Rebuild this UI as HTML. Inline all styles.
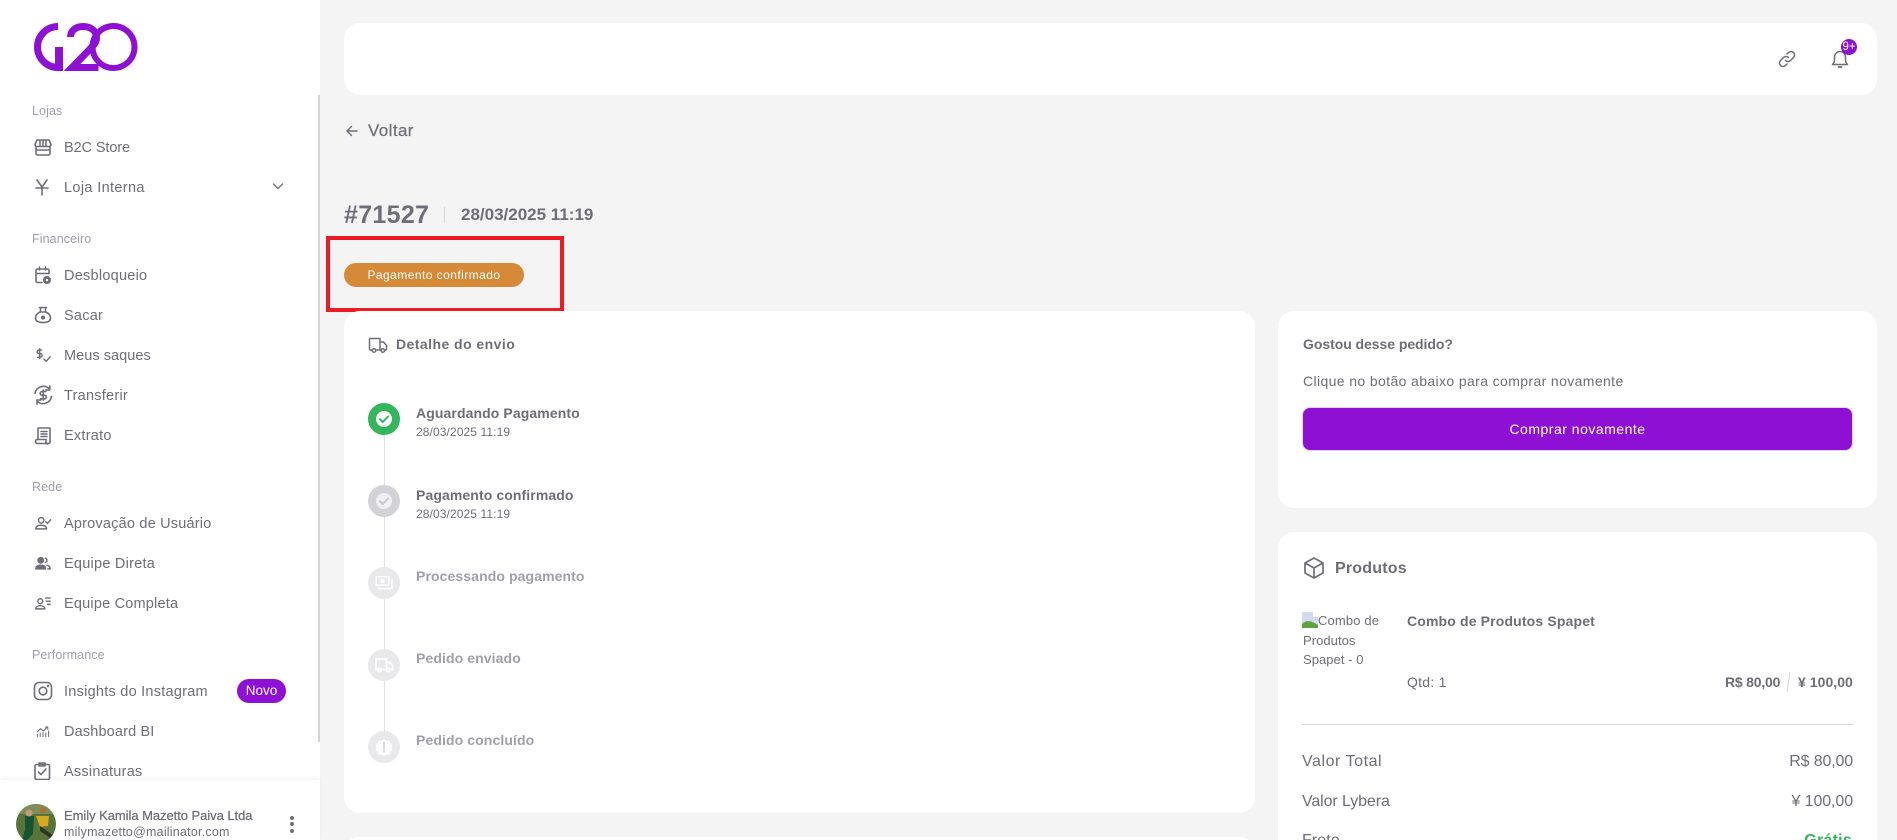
<!DOCTYPE html>
<html lang="pt-BR">
<head>
<meta charset="utf-8">
<title>Pedido #71527</title>
<style>
*{box-sizing:border-box}
html,body{margin:0;padding:0;width:1897px;height:840px;overflow:hidden}
body{background:#f4f4f4;font-family:"Liberation Sans",sans-serif;color:#6f6e77}
#root{position:relative;width:1897px;height:840px;overflow:hidden;background:#f4f4f4}
.a,.t,svg.i{position:absolute}
.t{line-height:20px;height:20px;white-space:nowrap;font-size:14.5px;letter-spacing:.25px}
.sec{font-size:12.5px;color:#a0a0ab;left:32px;letter-spacing:.1px}
.m{left:64px;margin-top:1px}
.card{position:absolute;background:#fff;border-radius:16px}
.b{font-weight:700}
.st{left:416px;font-weight:700;font-size:14px;letter-spacing:.1px}
.dt{left:416px;font-size:12px;letter-spacing:.1px}
.off{color:#a0a0ab}
svg.i{fill:none;stroke:#6f6e77;stroke-width:1.6;stroke-linecap:round;stroke-linejoin:round}
.c{position:absolute;left:368px;width:32px;height:32px;border-radius:50%}
</style>
</head>
<body>
<div id="root">

<!-- Sidebar -->
<aside class="a" style="left:0;top:0;width:320px;height:840px;background:#fff"></aside>
<div class="a" style="left:318px;top:95px;width:2px;height:647px;background:#d4d4d9"></div>

<svg class="a" style="left:0;top:0" width="160" height="90" viewBox="0 0 160 90" fill="none" stroke="#8e10d4" stroke-width="7">
<path d="M58 26.500A20.500 20.500 0 0 0 58 67.500"/>
<path d="M59 47V71" stroke-width="8"/>
<path d="M70.500 37C70.500 30.500 76 26.500 83 26.500C91 26.500 96.500 31 96.500 38C96.500 42 94 45 90.500 48.500L72 67.500H98.500" stroke-linejoin="miter"/>
<circle cx="113.500" cy="47" r="21" stroke-width="6"/>
</svg>

<div class="t sec" style="top:101px">Lojas</div>
<svg class="i" style="left:33px;top:137px" width="20" height="20" viewBox="0 0 20 20"><path d="M3 9V16.500a1.500 1.500 0 0 0 1.500 1.500H15.500a1.500 1.500 0 0 0 1.500-1.500V9M4 3H16L18 7.500a2 2 0 0 1-2 2H4a2 2 0 0 1-2-2ZM7 3.500V9M10 3.500V9M13 3.500V9M3 13H17"/></svg>
<div class="t m" style="top:137px;letter-spacing:-.1px">B2C Store</div>
<svg class="i" style="left:32px;top:177px" width="20" height="20" viewBox="0 0 20 20"><path d="M5 3L10 10L15 3M4 11H16M10 10V18"/></svg>
<div class="t m" style="top:177px;letter-spacing:.35px">Loja Interna</div>
<svg class="i" style="left:272px;top:180px;stroke-width:1.3" width="12" height="12" viewBox="0 0 12 12"><path d="M1.500 4L6 8.500L10.500 4"/></svg>

<div class="t sec" style="top:229px">Financeiro</div>
<svg class="i" style="left:33px;top:265px" width="20" height="20" viewBox="0 0 20 20"><path d="M16 8V5.500A1.500 1.500 0 0 0 14.500 4H4.500A1.500 1.500 0 0 0 3 5.500V16a1.500 1.500 0 0 0 1.500 1.500H9M3 8.500H16M6.500 2V5M12.500 2V5"/><circle cx="14" cy="15" r="4" fill="#6f6e77" stroke="none"/><circle cx="14" cy="15" r="1.200" fill="#fff" stroke="none"/></svg>
<div class="t m" style="top:265px">Desbloqueio</div>
<svg class="i" style="left:33px;top:305px" width="20" height="20" viewBox="0 0 20 20"><path d="M6.500 2.500H13.500M7.500 2.500V6.500M12.500 2.500V6.500M7 7C4 8.500 2.500 10.500 2.500 13C2.500 16 5 17.500 10 17.500S17.500 16 17.500 13C17.500 10.500 16 8.500 13 7Z"/><circle cx="10" cy="12.500" r="1.300" fill="#6f6e77"/></svg>
<div class="t m" style="top:305px">Sacar</div>
<svg class="i" style="left:34px;top:346px" width="18" height="18" viewBox="0 0 20 20"><path d="M8.500 4.500H5.500A1.500 1.500 0 0 0 5.500 8.500H7A1.500 1.500 0 0 1 7 12.500H4M6.300 3V14M11 14.500L13.500 17L18 12"/></svg>
<div class="t m" style="top:345px;letter-spacing:.05px">Meus saques</div>
<svg class="i" style="left:32px;top:385px" width="22" height="20" viewBox="0 0 22 20"><path d="M3 8.500A8.500 8.500 0 0 1 17.500 4M19.500 11.500A8.500 8.500 0 0 1 5 16M17.800 1V5H13.800M5 19V15H9M14 6.500H10A1.800 1.800 0 0 0 10 10.200H12.500A1.800 1.800 0 0 1 12.500 13.800H8.500M11.200 5V15"/></svg>
<div class="t m" style="top:385px">Transferir</div>
<svg class="i" style="left:33px;top:425px" width="20" height="20" viewBox="0 0 20 20"><path d="M5 14.500V3H17V17A1.500 1.500 0 0 1 15.500 18.500H4A1.800 1.800 0 0 1 2.500 16.500A2 2 0 0 1 4 14.500H13V17A1.500 1.500 0 0 0 15.500 18.500M8 6.500H14M8 9H14M8 11.500H14"/></svg>
<div class="t m" style="top:425px">Extrato</div>

<div class="t sec" style="top:477px">Rede</div>
<svg class="i" style="left:34px;top:514px" width="18" height="18" viewBox="0 0 20 20"><circle cx="8" cy="7" r="3"/><path d="M2 16.500C2 13.500 5 12.500 8 12.500S14 13.500 14 16.500H2ZM13 8.500L15 10.500L18.500 6.500"/></svg>
<div class="t m" style="top:513px;letter-spacing:.2px">Aprovação de Usuário</div>
<svg class="i" style="left:34px;top:554px" width="18" height="18" viewBox="0 0 20 20"><circle cx="7.500" cy="7" r="3" fill="#6f6e77"/><path d="M2 16.500C2 13.500 4.500 12.500 7.500 12.500S13 13.500 13 16.500H2Z" fill="#6f6e77"/><path d="M12.500 4.500A2.600 2.600 0 0 1 12.500 9.500M14.500 12.500C16.500 13 18 14.500 18 16.500H15.500"/></svg>
<div class="t m" style="top:553px">Equipe Direta</div>
<svg class="i" style="left:34px;top:594px" width="18" height="18" viewBox="0 0 20 20"><circle cx="7" cy="8" r="2.700"/><path d="M2 16.500C2 14 4.500 13 7 13S12 14 12 16.500H2ZM13 4.500H18M13.500 8H18M15 11.500H18"/></svg>
<div class="t m" style="top:593px;letter-spacing:.2px">Equipe Completa</div>

<div class="t sec" style="top:645px">Performance</div>
<svg class="i" style="left:32px;top:680px" width="22" height="22" viewBox="0 0 22 22"><rect x="2.500" y="2.500" width="17" height="17" rx="4.500"/><circle cx="11" cy="11" r="3.800"/><circle cx="16" cy="6" r=".5"/></svg>
<div class="t m" style="top:681px">Insights do Instagram</div>
<div class="a" style="left:237px;top:679px;width:49px;height:24px;background:#8e10d4;border-radius:12px;color:#fff;font-size:13.500px;line-height:24px;text-align:center">Novo</div>
<svg class="i" style="left:35px;top:723px;stroke-width:1.3" width="16" height="16" viewBox="0 0 20 20"><path d="M3 17V14M6.500 17V12.500M10 17V12M13.500 17V12.500M17 17V10M3 11L7 7L10.500 10L15.500 5M13 5H16V8"/></svg>
<div class="t m" style="top:721px;letter-spacing:.15px">Dashboard BI</div>
<svg class="i" style="left:32px;top:761px" width="20" height="20" viewBox="0 0 20 20"><rect x="3" y="3.500" width="14.500" height="15" rx="1.500"/><path d="M7 2H13V5H7ZM6.500 11L9 13.500L14 8"/></svg>
<div class="t m" style="top:761px">Assinaturas</div>

<div class="a" style="left:0;top:780px;width:320px;height:60px;background:#fff;box-shadow:0 -2px 4px rgba(0,0,0,.05)"></div>
<svg class="a" style="left:16px;top:804px" width="40" height="40" viewBox="0 0 40 40"><defs><clipPath id="av"><circle cx="20" cy="20" r="20"/></clipPath></defs><g clip-path="url(#av)"><rect width="40" height="40" fill="#59743a"/><rect width="40" height="10" fill="#7c8f57"/><path d="M9 12H18L17 30L11 36L6 36L9 26Z" fill="#16532f"/><circle cx="13" cy="9" r="3.500" fill="#c99b7c"/><path d="M20 12H33L32 22L24 23Z" fill="#d6a91f"/><circle cx="27" cy="6" r="3.500" fill="#a9743a"/><path d="M24 22L38 32L34 34L24 27Z" fill="#2c3526"/></g></svg>
<div class="t" style="left:64px;top:806px;font-size:13px;letter-spacing:-.05px;-webkit-text-stroke:.25px #6f6e77">Emily Kamila Mazetto Paiva Ltda</div>
<div class="t" style="left:64px;top:822px;font-size:12.500px;letter-spacing:.22px">milymazetto@mailinator.com</div>
<div class="a" style="left:290px;top:816px;width:4px;height:4px;border-radius:50%;background:#6f6e77"></div>
<div class="a" style="left:290px;top:822px;width:4px;height:4px;border-radius:50%;background:#6f6e77"></div>
<div class="a" style="left:290px;top:829px;width:4px;height:4px;border-radius:50%;background:#6f6e77"></div>

<!-- Header -->
<div class="card" style="left:344px;top:23px;width:1533px;height:72px"></div>
<svg class="i" style="left:1777px;top:49px;stroke-width:1.500" width="20" height="20" viewBox="0 0 20 20"><path d="M8.500 11.500A3.500 3.500 0 0 0 13.500 11.500L16.500 8.500A3.500 3.500 0 0 0 11.500 3.500L10 5M11.500 8.500A3.500 3.500 0 0 0 6.500 8.500L3.500 11.500A3.500 3.500 0 0 0 8.500 16.500L10 15"/></svg>
<svg class="i" style="left:1830px;top:49px;stroke-width:1.500" width="20" height="20" viewBox="0 0 20 20"><path d="M2.500 15.500C3.500 14.500 4.500 13.500 4.500 11V8A5.500 5.500 0 0 1 15.500 8V11C15.500 13.500 16.500 14.500 17.500 15.500Z"/><path d="M8.500 18H11.500" stroke-width="1.800"/></svg>
<div class="a" style="left:1841px;top:39px;width:16px;height:16px;border-radius:50%;background:#8e10d4;color:#fff;font-size:11.500px;line-height:16px;text-align:center">9+</div>

<!-- Voltar / title -->
<svg class="i" style="left:345px;top:124px;stroke-width:1.400" width="14" height="14" viewBox="0 0 14 14"><path d="M12 7H2M6.500 2.500L2 7L6.500 11.500"/></svg>
<div class="t" style="left:368px;top:121px;font-size:17px;letter-spacing:.4px;-webkit-text-stroke:.2px #6f6e77">Voltar</div>
<div class="t b" style="left:344px;top:205px;font-size:25px;letter-spacing:.3px">#71527</div>
<div class="a" style="left:444px;top:207px;width:1px;height:16px;background:#d4d4d9"></div>
<div class="t b" style="left:461px;top:205px;font-size:17px;letter-spacing:0">28/03/2025 11:19</div>
<div class="a" style="left:344px;top:263px;width:180px;height:24px;background:#d68a38;border-radius:12px;color:#fff;font-size:12px;line-height:24px;text-align:center;letter-spacing:.45px">Pagamento confirmado</div>
<div class="a" style="left:326px;top:236px;width:238px;height:76px;border:4.500px solid #ec1c24"></div>

<!-- Shipping card -->
<div class="card" style="left:344px;top:311px;width:911px;height:502px"></div>
<div class="card" style="left:344px;top:837px;width:911px;height:30px"></div>
<svg class="i" style="left:368px;top:335px;stroke-width:1.500" width="20" height="20" viewBox="0 0 20 20"><path d="M4 15H2.500A1 1 0 0 1 1.500 14V4.500A1 1 0 0 1 2.500 3.500H12V15H8M12 7H15.500L18.500 10.500V14A1 1 0 0 1 17.500 15H16.500M12 15H13"/><circle cx="6" cy="15.500" r="1.800"/><circle cx="14.800" cy="15.500" r="1.800"/></svg>
<div class="t b" style="left:396px;top:334px;font-size:14px;letter-spacing:.45px">Detalhe do envio</div>

<div class="a" style="left:384px;top:435px;width:1px;height:300px;background:#e2e2e6"></div>

<div class="c" style="top:403px;background:#34b75b"></div>
<svg class="a" style="left:374px;top:409px" width="20" height="20" viewBox="0 0 20 20"><circle cx="10" cy="10" r="8" fill="#fff"/><path d="M6 10.200L8.800 13L14 7.500" fill="none" stroke="#34b75b" stroke-width="2" stroke-linecap="round" stroke-linejoin="round"/></svg>
<div class="t st" style="top:403px">Aguardando Pagamento</div>
<div class="t dt" style="top:422px">28/03/2025 11:19</div>

<div class="c" style="top:485px;background:#d2d2d7"></div>
<svg class="a" style="left:374px;top:491px" width="20" height="20" viewBox="0 0 20 20"><circle cx="10" cy="10" r="8" fill="#f0f0f2"/><path d="M6 10.200L8.800 13L14 7.500" fill="none" stroke="#c6c6cc" stroke-width="2" stroke-linecap="round" stroke-linejoin="round"/></svg>
<div class="t st" style="top:485px">Pagamento confirmado</div>
<div class="t dt" style="top:504px">28/03/2025 11:19</div>

<div class="c" style="top:567px;background:#e9e9ec"></div>
<svg class="a" style="left:374px;top:573px" width="20" height="20" viewBox="0 0 20 20"><rect x="1.500" y="3" width="14" height="10" rx="1" fill="#fff"/><rect x="3" y="4.500" width="11" height="7" fill="#e9e9ec"/><circle cx="8.500" cy="8" r="2.200" fill="#fff"/><path d="M18 6V15.500H4" fill="none" stroke="#fff" stroke-width="1.500"/></svg>
<div class="t st off" style="top:566px">Processando pagamento</div>

<div class="c" style="top:649px;background:#e9e9ec"></div>
<svg class="a" style="left:374px;top:655px" width="20" height="20" viewBox="0 0 20 20" fill="none" stroke="#fff" stroke-width="1.700"><path d="M3.500 14.500H2V4H12.500V14.500H7.500M12.500 7.500H16L18.500 10.500V14.500H16.500"/><circle cx="5.500" cy="15" r="1.600"/><circle cx="14.500" cy="15" r="1.600"/></svg>
<div class="t st off" style="top:648px">Pedido enviado</div>

<div class="c" style="top:731px;background:#e9e9ec"></div>
<svg class="a" style="left:374px;top:737px" width="20" height="20" viewBox="0 0 20 20"><path d="M10 2L12.300 3.700L15.200 3.500L16.100 6.200L18.400 8L17.500 10.700L18.400 13.400L16 15L15.200 17.700L12.300 17.500L10 19L7.700 17.500L4.800 17.700L4 15L1.600 13.400L2.500 10.700L1.600 8L3.900 6.200L4.800 3.500L7.700 3.700Z" fill="#fff"/><path d="M10 6V11.500M10 13.500V14.800" stroke="#d9d9de" stroke-width="2" stroke-linecap="round"/></svg>
<div class="t st off" style="top:730px">Pedido concluído</div>

<!-- Right column -->
<div class="card" style="left:1278px;top:311px;width:599px;height:197px"></div>
<div class="t b" style="left:1303px;top:334px;font-size:14px;letter-spacing:-.05px">Gostou desse pedido?</div>
<div class="t" style="left:1303px;top:371px;font-size:14px;letter-spacing:.38px">Clique no botão abaixo para comprar novamente</div>
<div class="a" style="left:1302px;top:407px;width:551px;height:44px;background:#8e10d4;border:1px solid #e2d8ee;border-radius:8px;color:#fff;font-size:14px;line-height:42px;text-align:center;letter-spacing:.5px">Comprar novamente</div>

<div class="card" style="left:1278px;top:532px;width:599px;height:340px"></div>
<svg class="i" style="left:1302px;top:556px;stroke-width:1.700" width="24" height="24" viewBox="0 0 24 24"><path d="M12 2L21 7V17L12 22L3 17V7ZM3 7L12 12L21 7M12 12V22"/></svg>
<div class="t b" style="left:1335px;top:559px;font-size:16px;letter-spacing:.2px">Produtos</div>

<svg class="a" style="left:1302px;top:612px" width="16" height="16" viewBox="0 0 16 16"><path d="M0 0H11L16 5V16H0Z" fill="#d5dbee" /><path d="M0 16V12C4 8 8 8 16 13V16Z" fill="#5aa63c"/><path d="M11 0V5H16" fill="#fff"/></svg>
<div class="t" style="left:1318px;top:611px;font-size:13px;letter-spacing:.15px">Combo de</div>
<div class="t" style="left:1303px;top:631px;font-size:13px;letter-spacing:.05px">Produtos</div>
<div class="t" style="left:1303px;top:650px;font-size:13px;letter-spacing:.05px">Spapet - 0</div>
<div class="t b" style="left:1407px;top:611px;font-size:14px;letter-spacing:.15px">Combo de Produtos Spapet</div>
<div class="t" style="left:1407px;top:672px;font-size:14px">Qtd: 1</div>
<div class="t b" style="left:1725px;top:672px;font-size:14px;letter-spacing:-.2px">R$ 80,00</div>
<div class="a" style="left:1788px;top:672px;width:1px;height:20px;background:#d9d9de;transform:rotate(8deg)"></div>
<div class="t b" style="left:1798px;top:672px;font-size:14px;letter-spacing:.05px">¥ 100,00</div>
<div class="a" style="left:1302px;top:724px;width:551px;height:1px;background:#d4d4d9"></div>
<div class="t" style="left:1302px;top:752px;font-size:16px;letter-spacing:.55px">Valor Total</div>
<div class="t" style="right:44px;top:752px;font-size:16px;letter-spacing:-.15px">R$ 80,00</div>
<div class="t" style="left:1302px;top:792px;font-size:16px;letter-spacing:-.1px">Valor Lybera</div>
<div class="t" style="right:44px;top:792px;font-size:16px;letter-spacing:-.1px">¥ 100,00</div>
<div class="t" style="left:1302px;top:831px;font-size:16px;letter-spacing:.1px">Frete</div>
<div class="t b" style="right:45px;top:831px;font-size:16px;color:#34b75b">Grátis</div>

</div>
</body>
</html>
